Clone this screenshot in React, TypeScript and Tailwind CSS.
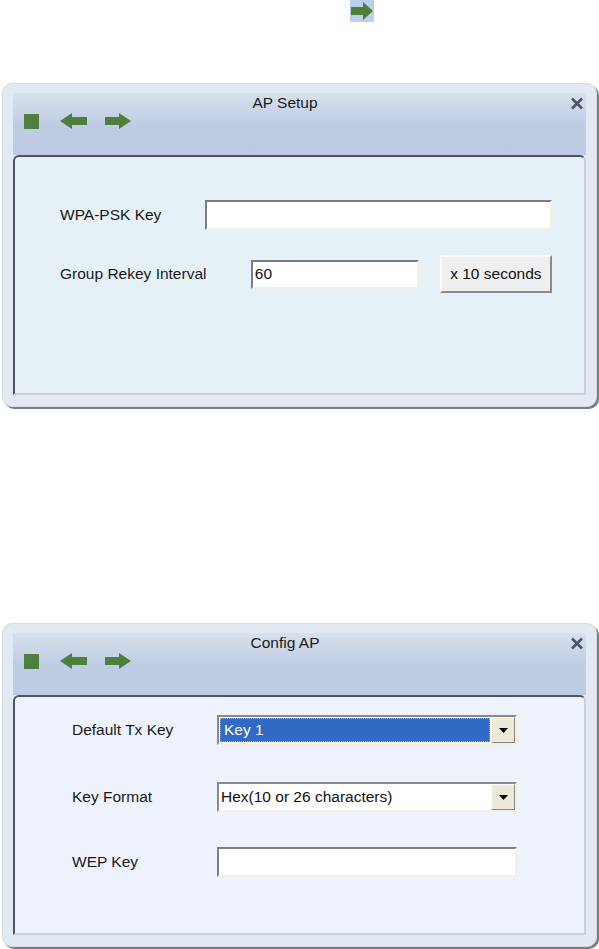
import React from 'react';

const font = { fontFamily: '"Liberation Sans", Arial, sans-serif' };

const StopIcon = () => <div className="w-[15px] h-[15px] bg-[#4f7f3c]" />;

const LeftArrow = () => (
  <svg width="27" height="16" viewBox="0 0 27 16">
    <polygon points="0,8 12,0 12,4 27,4 27,12 12,12 12,16" fill="#4f7f3c" />
  </svg>
);

const RightArrow = () => (
  <svg width="26" height="16" viewBox="0 0 26 16">
    <polygon points="26,8 14,0 14,4 0,4 0,12 14,12 14,16" fill="#4f7f3c" />
  </svg>
);

const TextBox: React.FC<{ className: string; value?: string }> = ({ className, value }) => (
  <div
    className={`bg-white border-2 border-t-[#7d7d7d] border-l-[#7d7d7d] border-b-[#f3efe4] border-r-[#f3efe4] flex items-center pl-[2px] text-[15.5px] text-[#111] ${className}`}
  >
    {value}
  </div>
);

const DropBtn = () => (
  <div className="w-[24px] h-full bg-[#ece9d8] border border-t-white border-l-white border-b-[#8a8a80] border-r-[#8a8a80] flex items-center justify-center">
    <svg width="9" height="5" viewBox="0 0 9 5">
      <polygon points="0,0 9,0 4.5,5" fill="#000" />
    </svg>
  </div>
);

const Select: React.FC<{ value: string; selected?: boolean }> = ({ value, selected }) => (
  <div className="w-[300px] h-[30px] bg-white border-2 border-t-[#8a8a82] border-l-[#8a8a82] border-b-[#f3efe4] border-r-[#f3efe4] flex">
    {selected ? (
      <div className="flex-1 m-[1px] bg-[#316ac5] border border-dotted border-[#c9a24a] flex items-center pl-[3px] text-[15.5px] text-white">
        {value}
      </div>
    ) : (
      <div className="flex-1 flex items-center pl-[2px] text-[15.5px] text-[#111]">{value}</div>
    )}
    <DropBtn />
  </div>
);

const Window: React.FC<{ title: string; panelBg: string; children: React.ReactNode }> = ({
  title,
  panelBg,
  children,
}) => (
  <div className="mx-[2px] w-[595px] rounded-[10px] bg-[#e3e9f2] border border-[#d4dae4] shadow-[2px_2px_0_#7a7d84] px-[10px] pt-[9px] pb-[11px]">
    <div className="h-[62px] bg-gradient-to-b from-[#d8e0ec] via-[#bfcde4] to-[#bccbe3] flex flex-col">
      <div className="h-[20px] flex items-center relative">
        <div className="w-[544px] text-center text-[15.5px] text-[#1a1a1a]">{title}</div>
        <svg width="14" height="13" viewBox="0 0 14 13" className="ml-[13px]">
          <path d="M2 1.5 L12 11.5 M12 1.5 L2 11.5" stroke="#4a5470" strokeWidth="2.6" />
        </svg>
      </div>
      <div className="flex items-center pl-[11px] h-[16px]">
        <StopIcon />
        <div className="ml-[21px]">
          <LeftArrow />
        </div>
        <div className="ml-[18px]">
          <RightArrow />
        </div>
      </div>
    </div>
    <div
      className={`h-[240px] rounded-t-[6px] border-2 border-t-[#50545a] border-l-[#50545a] border-r-[#c9d0db] border-b-[#c9d0db] ${panelBg}`}
    >
      {children}
    </div>
  </div>
);

export default function App() {
  return (
    <div className="w-[599px] h-[949px] bg-white overflow-hidden" style={font}>
      <div className="pl-[350px]">
        <div className="w-[24px] h-[22px] bg-[#bccfe9] flex items-center justify-center">
          <svg width="24" height="22" viewBox="0 0 24 22">
            <polygon points="1,7 13,7 13,2 23,11 13,20 13,15 1,15" fill="#4e7e3a" />
          </svg>
        </div>
      </div>

      <div className="mt-[61px]">
        <Window title="AP Setup" panelBg="bg-[#e6f0f7]">
          <div className="pl-[45px] pr-[32px] pt-[43px] text-[15.5px] text-[#1a1a1a]">
            <div className="flex items-center h-[30px]">
              <div className="w-[145px]">WPA-PSK Key</div>
              <TextBox className="w-[348px] h-[30px]" />
            </div>
            <div className="flex items-center h-[38px] mt-[25px]">
              <div className="w-[192px]">Group Rekey Interval</div>
              <TextBox className="w-[169px] h-[29px]" value="60" />
              <div className="ml-[21px] w-[113px] h-[38px] bg-[#efefef] border-2 border-t-[#fafafa] border-l-[#fafafa] border-b-[#8c8c8c] border-r-[#8c8c8c] flex items-center justify-center text-[15.5px] text-[#111]">
                x 10 seconds
              </div>
            </div>
          </div>
        </Window>
      </div>

      <div className="mt-[216px]">
        <Window title="Config AP" panelBg="bg-[#eef2fd]">
          <div className="pl-[57px] pt-[18px] text-[15.5px] text-[#1a1a1a]">
            <div className="flex items-center h-[30px]">
              <div className="w-[145px]">Default Tx Key</div>
              <Select value="Key 1" selected />
            </div>
            <div className="flex items-center h-[30px] mt-[37px]">
              <div className="w-[145px]">Key Format</div>
              <Select value="Hex(10 or 26 characters)" />
            </div>
            <div className="flex items-center h-[30px] mt-[35px]">
              <div className="w-[145px]">WEP Key</div>
              <TextBox className="w-[300px] h-[30px]" />
            </div>
          </div>
        </Window>
      </div>
    </div>
  );
}
